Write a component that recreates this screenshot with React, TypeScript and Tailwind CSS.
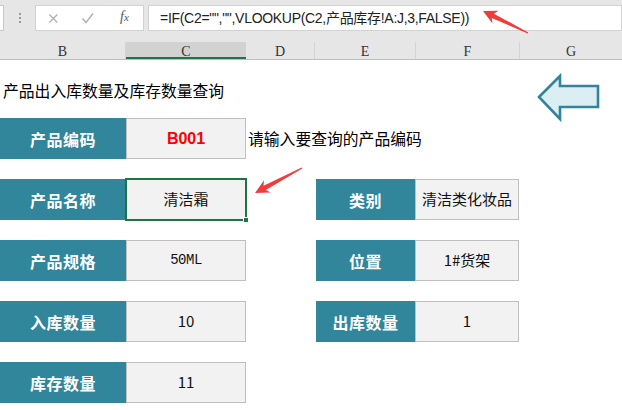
import React from "react";

function arrowPoints(tx: number, ty: number, sx: number, sy: number, headLen = 14, headW = 7, shaftW = 2.4, tailW = 0.6) {
  const dx = sx - tx;
  const dy = sy - ty;
  const len = Math.hypot(dx, dy);
  const ux = dx / len;
  const uy = dy / len;
  const px = -uy;
  const py = ux;
  const pts: [number, number][] = [
    [tx, ty],
    [tx + ux * headLen + px * headW, ty + uy * headLen + py * headW],
    [tx + ux * headLen * 0.78 + px * shaftW, ty + uy * headLen * 0.78 + py * shaftW],
    [sx + px * tailW, sy + py * tailW],
    [sx - px * tailW, sy - py * tailW],
    [tx + ux * headLen * 0.78 - px * shaftW, ty + uy * headLen * 0.78 - py * shaftW],
    [tx + ux * headLen - px * headW, ty + uy * headLen - py * headW],
  ];
  return pts.map((p) => p.join(",")).join(" ");
}

const cjk = "font-['Noto_Sans_CJK_SC','Noto_Sans',sans-serif]";

function Label({ text, w }: { text: string; w: string }) {
  return (
    <div className={`${w} h-full bg-[#31869b] flex items-center justify-center text-white font-bold text-[16px] tracking-[0.5px] ${cjk}`}>
      {text}
    </div>
  );
}

function Value({ children, w, className = "" }: { children: React.ReactNode; w: string; className?: string }) {
  return (
    <div className={`${w} h-full bg-[#f2f2f2] border border-[#bfbfbf] flex items-center justify-center text-[15px] text-[#111] ${cjk} ${className}`}>
      {children}
    </div>
  );
}

export default function App() {
  return (
    <div className={`relative w-[622px] h-[410px] overflow-hidden bg-white ${cjk}`}>
      {/* formula toolbar */}
      <div className="h-[42px] bg-[#e6e6e6] flex items-start pt-[5px]">
        <div className="w-[4px] h-[26px] bg-white border-y border-r border-[#c8c8c8]" />
        <div className="w-[31px] h-[26px] flex flex-col items-center justify-center gap-[2px]">
          <div className="w-[2px] h-[2px] bg-[#9a9a9a]" />
          <div className="w-[2px] h-[2px] bg-[#9a9a9a]" />
          <div className="w-[2px] h-[2px] bg-[#9a9a9a]" />
        </div>
        <div className="w-[109px] h-[26px] bg-white border border-[#d2d2d2] flex items-center">
          <svg width="108" height="24" viewBox="0 0 108 24" className="block">
            <path d="M13.5 8.5 L21.5 16.5 M21.5 8.5 L13.5 16.5" stroke="#b4b4b4" strokeWidth="1.4" fill="none" />
            <path d="M47 12.5 L50.5 16.5 L57.5 7.5" stroke="#b4b4b4" strokeWidth="1.6" fill="none" />
          </svg>
          <span className="absolute left-[120px] top-[8px] text-[14px] italic font-['Liberation_Serif',serif] text-[#555] leading-[18px]">
            f<span className="text-[11px]">x</span>
          </span>
        </div>
        <div className="ml-[4px] flex-1 h-[26px] bg-white border border-[#d2d2d2] flex items-center pl-[11px]">
          <span className="text-[14px] text-[#222] font-['Liberation_Sans','Noto_Sans_CJK_SC',sans-serif] tracking-[-0.3px] whitespace-nowrap">
            =IF(C2="","",VLOOKUP(C2,产品库存!A:J,3,FALSE))
          </span>
        </div>
      </div>

      {/* column headers */}
      <div className="h-[18px] bg-[#e6e6e6] flex border-b border-[#bdbdbd] text-[14px] text-[#333] font-['Liberation_Serif',serif] leading-[19px]">
        <div className="w-[126px] flex justify-center border-r border-[#d4d4d4]">B</div>
        <div className="w-[120px] flex justify-center bg-[#d2d2d2] border-b-2 border-[#217346]">C</div>
        <div className="w-[69px] flex justify-center border-r border-[#d4d4d4]">D</div>
        <div className="w-[101px] flex justify-center border-r border-[#d4d4d4]">E</div>
        <div className="w-[104px] flex justify-center border-r border-[#d4d4d4]">F</div>
        <div className="flex-1 flex justify-center">G</div>
      </div>

      {/* sheet body */}
      <div className="flex flex-col">
        <div className="h-[58px] pt-[20px] pl-[3px] text-[15.8px] leading-[22px] text-black">
          产品出入库数量及库存数量查询
        </div>

        <div className="h-[41px] flex">
          <Label text="产品编码" w="w-[126px]" />
          <Value w="w-[120px]" className="border-[#8c8c8c]">
            <span className="text-[#ff0000] font-bold text-[16px] font-['Liberation_Sans',sans-serif]">B001</span>
          </Value>
          <div className="pl-[2px] flex items-center text-[15.8px] text-black">请输入要查询的产品编码</div>
        </div>

        <div className="mt-[20px] h-[41px] flex">
          <Label text="产品名称" w="w-[126px]" />
          <div className="relative w-[120px] h-full">
            <Value w="w-full">清洁霜</Value>
            <div className="absolute -left-[1px] -top-[1px] -right-[1px] -bottom-[1px] border-2 border-[#217346]" />
            <div className="absolute -right-[3px] -bottom-[3px] w-[6px] h-[6px] bg-[#217346] border border-white" />
          </div>
          <div className="w-[70px]" />
          <Label text="类别" w="w-[99px]" />
          <Value w="w-[104px]">清洁类化妆品</Value>
        </div>

        <div className="mt-[20px] h-[41px] flex">
          <Label text="产品规格" w="w-[126px]" />
          <Value w="w-[120px]">
            <span className="font-['Liberation_Mono',monospace] text-[14px] tracking-[-0.5px]">50ML</span>
          </Value>
          <div className="w-[70px]" />
          <Label text="位置" w="w-[99px]" />
          <Value w="w-[104px]">1#货架</Value>
        </div>

        <div className="mt-[20px] h-[41px] flex">
          <Label text="入库数量" w="w-[126px]" />
          <Value w="w-[120px]">10</Value>
          <div className="w-[70px]" />
          <Label text="出库数量" w="w-[99px]" />
          <Value w="w-[104px]">1</Value>
        </div>

        <div className="mt-[20px] h-[41px] flex">
          <Label text="库存数量" w="w-[126px]" />
          <Value w="w-[120px]">11</Value>
        </div>
      </div>

      {/* floating shapes */}
      <svg className="absolute inset-0 pointer-events-none" width="622" height="410" viewBox="0 0 622 410">
        <polygon
          points="539,97 560,76 560,86 598,86 598,107 560,107 560,119"
          fill="#dbeef3"
          stroke="#31849b"
          strokeWidth="2.6"
          strokeLinejoin="miter"
        />
        <polygon points={arrowPoints(483, 11, 528, 33)} fill="#f03c3c" />
        <polygon points={arrowPoints(255, 193, 302, 168)} fill="#f03c3c" />
      </svg>
    </div>
  );
}
